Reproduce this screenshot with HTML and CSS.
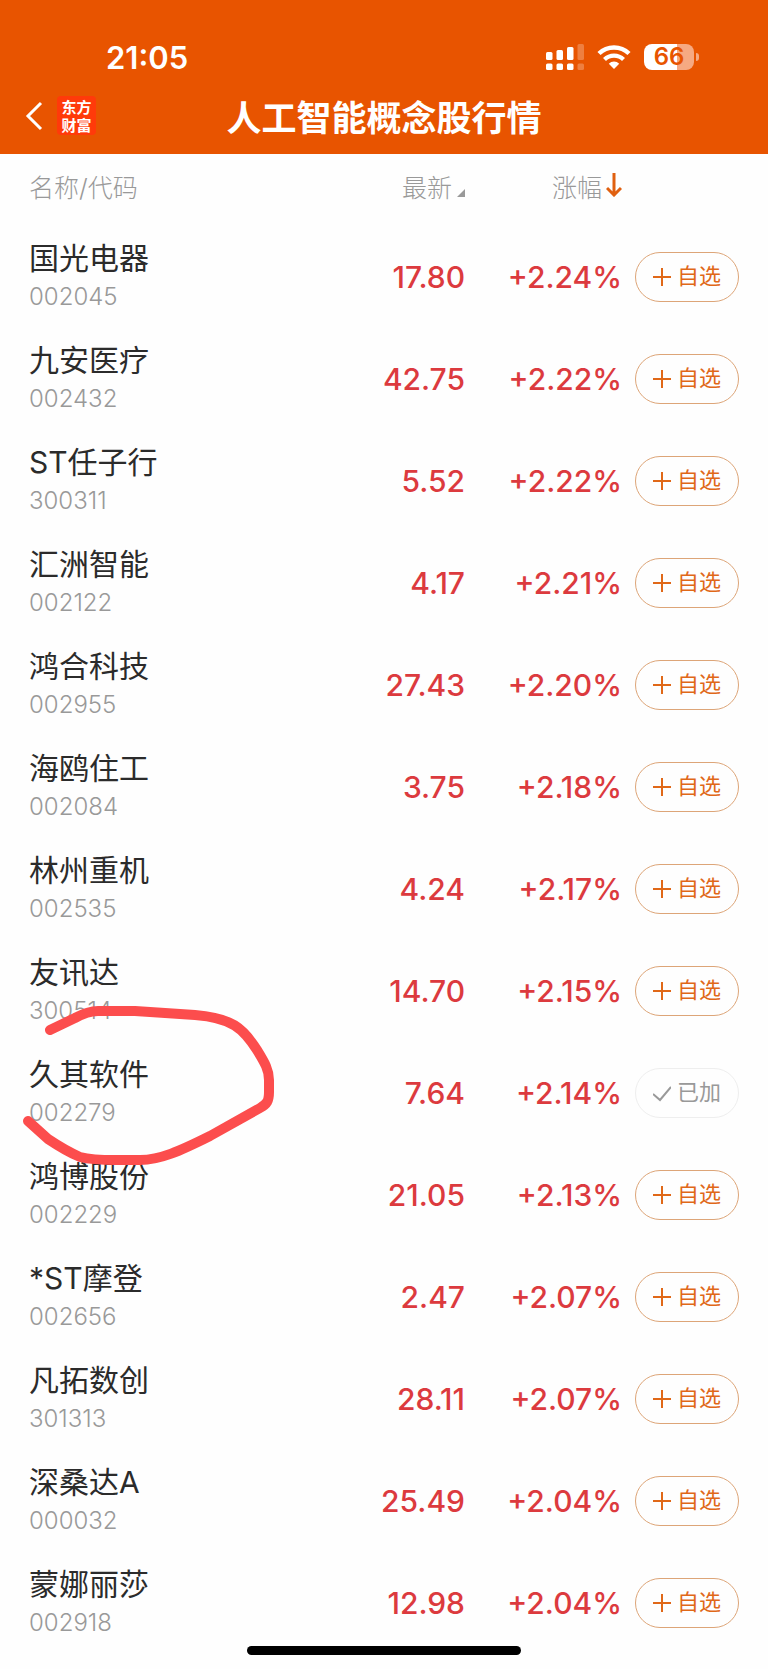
FILE: index.html
```html
<!DOCTYPE html>
<html lang="zh-CN">
<head>
  <meta charset="UTF-8" />
  <meta name="viewport" content="width=device-width, initial-scale=1.0" />
  <title>人工智能概念股行情</title>
  <link rel="stylesheet" href="styles.css">
</head>
<body>
  <header class="header">
    <div class="status-bar">
      <span class="time">21:05</span>
      <div class="status-icons">
        <svg class="signal" viewBox="0 0 38 26" aria-hidden="true">
          <rect x="0" y="8" width="6.500" height="8" rx="1.5"/>
          <rect x="10.500" y="6" width="6.500" height="10" rx="1.5"/>
          <rect x="21" y="3" width="6.500" height="13" rx="1.5"/>
          <rect class="dim" x="31.500" y="0" width="6.500" height="16" rx="1.5"/>
          <rect x="0" y="19.500" width="6.500" height="6.500" rx="1.5"/>
          <rect x="10.500" y="19.500" width="6.500" height="6.500" rx="1.5"/>
          <rect x="21" y="19.500" width="6.500" height="6.500" rx="1.5"/>
          <rect class="dim" x="31.500" y="19.500" width="6.500" height="6.500" rx="1.5"/>
        </svg>
        <svg class="wifi" viewBox="0 0 34 24" aria-hidden="true">
          <path d="M2 8.500 A21.500 21.500 0 0 1 32 8.500" fill="none" stroke="#fff" stroke-width="4.500"/>
          <path d="M7.500 14.600 A13.500 13.500 0 0 1 26.500 14.600" fill="none" stroke="#fff" stroke-width="4.200"/>
          <path d="M17 24 L11.800 18.700 A7.500 7.500 0 0 1 22.200 18.700 Z" fill="#fff"/>
        </svg>
        <div class="battery"><span class="battery-level">66</span><i class="battery-cap"></i></div>
      </div>
    </div>
    <nav class="nav">
      <div class="nav-left">
        <a class="back" href="#" aria-label="返回">
          <svg viewBox="0 0 18 30" aria-hidden="true"><path d="M16 2 L3 15 L16 28"/></svg>
        </a>
        <a class="logo" href="#"><span>东方</span><span>财富</span></a>
      </div>
      <h1>人工智能概念股行情</h1>
    </nav>
  </header>

  <main>
    <table class="stocks">
      <thead>
        <tr>
          <th class="name" scope="col">名称/代码</th>
          <th class="price" scope="col"><button class="sort" type="button">最新<svg class="corner" viewBox="0 0 8 8" aria-hidden="true"><path d="M8 0 V8 H0 Z"/></svg></button></th>
          <th class="change" scope="col"><button class="sort" type="button">涨幅<svg class="arrow" viewBox="0 0 16 24" aria-hidden="true"><path d="M8 0 V22 M1 15 L8 22 L15 15"/></svg></button></th>
          <td class="action"></td>
        </tr>
      </thead>
      <tbody id="rows"></tbody>
    </table>
  </main>
  <div class="home-bar"></div>

  <script>
    const stocks = [
      ['国光电器', '002045', '17.80', '+2.24%'],
      ['九安医疗', '002432', '42.75', '+2.22%'],
      ['ST任子行', '300311', '5.52', '+2.22%'],
      ['汇洲智能', '002122', '4.17', '+2.21%'],
      ['鸿合科技', '002955', '27.43', '+2.20%'],
      ['海鸥住工', '002084', '3.75', '+2.18%'],
      ['林州重机', '002535', '4.24', '+2.17%'],
      ['友讯达', '300514', '14.70', '+2.15%'],
      ['久其软件', '002279', '7.64', '+2.14%', true],
      ['鸿博股份', '002229', '21.05', '+2.13%'],
      ['*ST摩登', '002656', '2.47', '+2.07%'],
      ['凡拓数创', '301313', '28.11', '+2.07%'],
      ['深桑达A', '000032', '25.49', '+2.04%'],
      ['蒙娜丽莎', '002918', '12.98', '+2.04%']
    ];

    const plus = '<svg viewBox="0 0 18 18" aria-hidden="true"><path d="M9 0 V18 M0 9 H18"/></svg><span>自选</span>';
    const check = '<svg viewBox="0 0 18 18" aria-hidden="true"><path d="M0 10 L7 16 L18 3"/></svg><span>已加</span>';
    const circle = `<svg class="mark" viewBox="0 0 300 170" aria-hidden="true">
      <path d="M50 30 L75 18 Q88 11 98 11 H135 L195 15 C232 18 243 28 257 50 C265 63 269 70 269 80 V92 C269 101 267 104 260 108 L210 136 C180 151 160 160 140 160 H115 C98 160 88 159 80 157 C68 152 57 145 48 139 L28 121"/></svg>`;

    document.getElementById('rows').innerHTML = stocks.map(([name, code, price, change, added]) => `
      <tr>
        <td class="name"><div class="stock-name">${name}</div><div class="code">${code}</div>${added ? circle : ''}</td>
        <td class="price">${price}</td>
        <td class="change">${change}</td>
        <td class="action"><button class="add${added ? ' added' : ''}" type="button">${added ? check : plus}</button></td>
      </tr>`).join('');
  </script>
</body>
</html>
```

FILE: styles.css
```css
* {
  box-sizing: border-box;
}
body {
  margin: 0;
  background: #fefefe;
  color: #2b2b2b;
  font-family: Inter, "Noto Sans CJK SC", sans-serif;
}
button {
  font-family: inherit;
  background: none;
  border: none;
  padding: 0;
  cursor: pointer;
}
a {
  color: inherit;
  text-decoration: none;
}
.header {
  background: #e85400;
  color: #fff;
  padding-top: 37px;
}
.status-bar {
  display: flex;
  justify-content: space-between;
  align-items: center;
  height: 40px;
  padding: 0 74px 0 106px;
}
.time {
  font-size: 31px;
  font-weight: 600;
}
.status-icons {
  display: flex;
  align-items: center;
  gap: 13px;
}
.signal {
  width: 38px;
  height: 26px;
  fill: #fff;
}
.signal .dim {
  opacity: 0.25;
}
.wifi {
  width: 34px;
  height: 24px;
}
.battery {
  position: relative;
  width: 50px;
  height: 26px;
  border-radius: 8px;
  background: linear-gradient(90deg, #fff 66%, #f6a982 66%);
  color: #e85400;
  font-size: 24px;
  font-weight: 600;
  line-height: 26px;
  text-align: center;
}
.battery-cap {
  position: absolute;
  right: -5px;
  top: 9px;
  width: 3px;
  height: 8px;
  border-radius: 0 4px 4px 0;
  background: #f6a982;
}
.nav {
  display: grid;
  grid-template-columns: 1fr auto 1fr;
  align-items: center;
  height: 77px;
  padding: 0 25px;
}
.nav-left {
  display: flex;
  align-items: center;
  gap: 14px;
}
.back svg {
  display: block;
  width: 18px;
  height: 30px;
  fill: none;
  stroke: #fff;
  stroke-width: 3;
}
.logo {
  display: flex;
  flex-direction: column;
  justify-content: center;
  width: 39px;
  height: 39px;
  border-radius: 4px;
  background: #ff3a0a;
  font-family: "Noto Sans CJK SC", sans-serif;
  font-size: 15px;
  font-weight: 700;
  line-height: 18px;
  text-align: center;
}
.nav h1 {
  margin: 0;
  padding-top: 4px;
  font-size: 35px;
  font-weight: 700;
  line-height: 48px;
}
.stocks {
  width: 100%;
  border-collapse: collapse;
}
.stocks th,
.stocks td {
  padding: 0;
}
.stocks th {
  height: 72px;
  padding-bottom: 8px;
  color: #999;
  font-size: 25px;
  font-weight: 300;
}
.stocks tbody td {
  height: 102px;
}
.stocks .name {
  position: relative;
  padding-left: 29px;
  text-align: left;
}
.stocks .price {
  width: 140px;
  text-align: right;
}
.stocks .change {
  width: 157px;
  text-align: right;
}
.stocks .action {
  width: 146px;
  padding-right: 29px;
  text-align: right;
}
td.price,
td.change {
  color: #dc3a3e;
  font-size: 30px;
  font-weight: 500;
}
.sort {
  color: #999;
  font-size: 25px;
  font-weight: 300;
}
.corner {
  width: 8px;
  height: 8px;
  margin-left: 5px;
  fill: #999;
}
.arrow {
  width: 16px;
  height: 24px;
  margin-left: 4px;
  fill: none;
  stroke: #e06010;
  stroke-width: 3;
}
.stock-name {
  font-size: 30px;
  line-height: 40px;
}
.code {
  color: #999;
  font-size: 24px;
  font-weight: 300;
  line-height: 38px;
}
.add {
  display: inline-flex;
  align-items: center;
  justify-content: center;
  gap: 6px;
  width: 104px;
  height: 50px;
  border: 1px solid #dda578;
  border-radius: 25px;
  color: #e06818;
  font-size: 22px;
  line-height: 28px;
  vertical-align: middle;
}
.add span {
  padding-bottom: 2px;
}
.add svg {
  width: 18px;
  height: 18px;
  fill: none;
  stroke: currentColor;
  stroke-width: 2;
}
.added {
  border-color: #eee;
  color: #999;
}
/* hand-drawn circle, lies over the neighbouring rows */
.mark {
  position: absolute;
  left: 0;
  top: -42px;
  z-index: 1;
  width: 300px;
  height: 170px;
  fill: none;
  stroke: #fc4d4d;
  stroke-width: 10;
  stroke-linecap: round;
  stroke-linejoin: round;
  pointer-events: none;
}
.home-bar {
  position: fixed;
  left: 50%;
  bottom: 14px;
  width: 274px;
  height: 9px;
  border-radius: 5px;
  background: #000;
  transform: translateX(-50%);
}
```
